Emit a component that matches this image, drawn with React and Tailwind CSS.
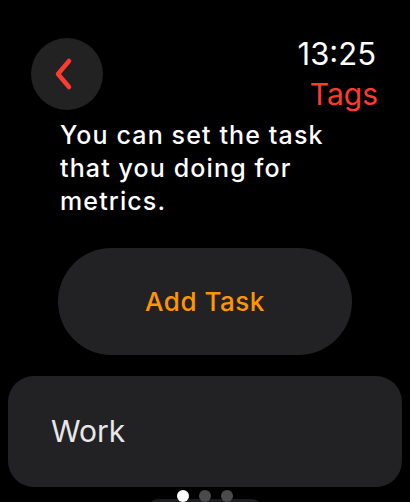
export default function App() {
  return (
    <div
      className="relative w-[410px] h-[502px] overflow-hidden bg-black text-white"
      style={{ fontFamily: 'Inter, "Noto Sans", sans-serif' }}
    >
      {/* Header */}
      <div className="flex items-start justify-between pt-[38px] pl-[31px] pr-[34px]">
        <button className="flex h-[72px] w-[72px] items-center justify-center rounded-full bg-[#222222]">
          <svg width="24" height="34" viewBox="0 0 24 34" fill="none" className="ml-[-4px]">
            <path
              d="M16 4 L5 17 L16 30"
              stroke="#ff3b30"
              strokeWidth="4.5"
              strokeLinecap="round"
              strokeLinejoin="round"
            />
          </svg>
        </button>
        <div className="flex flex-col items-end">
          <span className="text-[31px] leading-[34px] mt-[-1px] text-white">13:25</span>
          <span className="text-[30px] leading-[34px] mt-[6px] mr-[-2px] text-[#ff3b30]">Tags</span>
        </div>
      </div>

      {/* Description */}
      <p className="mt-[8px] pl-[60px] pr-[50px] text-[25px] leading-[33px] font-medium tracking-[0.045em] text-white">
        You can set the task that you doing for metrics.
      </p>

      {/* Add Task */}
      <div className="mt-[30px] flex justify-center">
        <button className="flex h-[107px] w-[294px] items-center justify-center rounded-full bg-[#222224] text-[26px] font-medium tracking-[0.02em] text-[#ff9500]">
          Add Task
        </button>
      </div>

      {/* Work row */}
      <div className="mx-[8px] mt-[21px] flex h-[111px] items-center rounded-[26px] bg-[#222224] pl-[43px]">
        <span className="text-[30px] text-[#e8e8e8]">Work</span>
      </div>

      {/* Page dots */}
      <div className="relative z-10 mt-[3px] flex justify-center gap-[10px]">
        <span className="h-[12px] w-[12px] rounded-full bg-white" />
        <span className="h-[12px] w-[12px] rounded-full bg-[#4a4a4a]" />
        <span className="h-[12px] w-[12px] rounded-full bg-[#4a4a4a]" />
      </div>

      {/* Next card peek */}
      <div className="mx-auto mt-[-3px] h-[20px] w-[114px] rounded-t-[10px] bg-[#1c1c1e]" />
    </div>
  );
}
